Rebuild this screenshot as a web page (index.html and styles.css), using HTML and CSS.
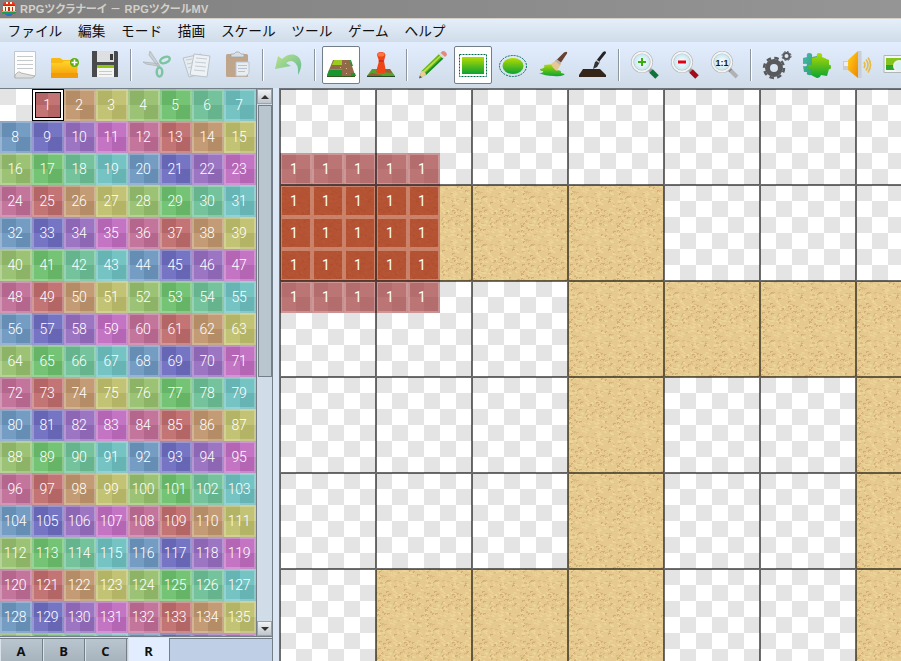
FILE: index.html
```html
<!DOCTYPE html>
<html lang="ja">
<head>
<meta charset="utf-8">
<title>RPGツクラナーイ - RPGツクールMV</title>
<link rel="stylesheet" href="styles.css">
</head>
<body>
<svg class="defs" width="0" height="0" aria-hidden="true">
  <defs>
    <linearGradient id="lime" x1="0" y1="0" x2="0" y2="1"><stop offset="0" stop-color="#b4dc00"/><stop offset="1" stop-color="#0aa234"/></linearGradient>
    <linearGradient id="gold" x1="0" y1="0" x2="0" y2="1"><stop offset="0" stop-color="#ffd62a"/><stop offset="1" stop-color="#f39a08"/></linearGradient>
    <linearGradient id="horn" x1="0" y1="0" x2="1" y2="1"><stop offset="0" stop-color="#ffd21d"/><stop offset="1" stop-color="#ef8500"/></linearGradient>
    <linearGradient id="teal" x1="0" y1="0" x2="1" y2="1"><stop offset="0" stop-color="#49b9ae"/><stop offset="1" stop-color="#279b62"/></linearGradient>
    <linearGradient id="undo" x1="0" y1="0" x2="1" y2="1"><stop offset="0" stop-color="#bce28c"/><stop offset="1" stop-color="#61bb94"/></linearGradient>
    <radialGradient id="glass"><stop offset="0" stop-color="#fff"/><stop offset="1" stop-color="#bce4ef"/></radialGradient>
  </defs>
</svg>
<header class="titlebar">
  <svg class="logo" width="14" height="14" viewBox="0 0 14 14"><path d="M1 2l2-2h8l2 2v6h1v3l-3 1-2 2H5l-2-2-3-1V8h1z" fill="#e83418"/><path d="M4 0h2v2H4zM8 0h2v2H8zM1 4h12v5H1z" fill="#fff3dc"/><path d="M3 5h1v4H3zM6 5h2v4H6zM10 5h1v4h-1zM1 3h12v1H1z" fill="#c52a18"/><path d="M0 9h14v1H0z" fill="#e4a818"/><path d="M0 10h14v1l-2 1H2l-2-1z" fill="#229b47"/><path d="M3 12h8l-3 2H6z" fill="#2572d6"/></svg>
  <span class="caption">RPGツクラナーイ － RPGツクールMV</span>
</header>
<nav class="menubar"><span>ファイル</span><span>編集</span><span>モード</span><span>描画</span><span>スケール</span><span>ツール</span><span>ゲーム</span><span>ヘルプ</span></nav>
<div class="toolbar">
  <div class="tool"><svg viewBox="0 0 28 28"><path d="M3.500 .5h21v24l-3 2h-18z" fill="#fdfdfd" stroke="#c3c7c9"/><path d="M6 5.500h16M6 9.500h16M6 13.500h16M6 17.500h16" stroke="#c6c9cb"/><path d="M4 24q4-5 6-2l14 3-3 2H4z" fill="#dfe0dd" stroke="#a5a8a5" stroke-width=".8"/></svg></div>
  <div class="tool"><svg viewBox="0 0 28 28"><path d="M0 8q0-1 1-1h8l3 2h14v17H0z" fill="#f9b912"/><path d="M0 12h11l2-2h14l-1 16H1z" fill="url(#gold)"/><path d="M0 22h27v5H0z" fill="#f29a08"/><circle cx="23.500" cy="11.500" r="4.500" fill="#58ad12"/><path d="M20.500 11.500h6M23.500 8.500v6" stroke="#fff" stroke-width="1.600"/></svg></div>
  <div class="tool"><svg viewBox="0 0 28 28"><path d="M1 0h25l1 1v25H1z" fill="#494a4c"/><path d="M6 0h17v11H6z" fill="#dedfe1"/><path d="M19 3h3v6h-3z" fill="#3b3c3e"/><path d="M6 14h17v12H6z" fill="#f5f5f5"/><path d="M6 14h17v3H6z" fill="#8cca08"/><path d="M8 20.500h13M8 23.500h13" stroke="#c9c9c9"/></svg></div>
  <i class="sep"></i>
  <div class="tool"><svg viewBox="0 0 28 28"><path d="M0 11l15 1.500v2.500L3 13zM7 0l10 15-2 1L6 4z" fill="#cbd1d3" stroke="#a8b0b3" stroke-width=".7"/><g fill="none" stroke="#7cc5a0" stroke-width="2.500"><ellipse cx="22" cy="9" rx="5" ry="2.800" transform="rotate(-22 22 9)"/><ellipse cx="16.500" cy="21" rx="2.800" ry="4.500"/></g></svg></div>
  <div class="tool"><svg viewBox="0 0 28 28" stroke="#b9c3cb"><path d="M0 7l18-4 5 19-17 4z" fill="#e6ebef"/><path d="M11 3l16 2-3 21-17-2z" fill="#eef2f5"/><path d="M13 7l11 1M12 11l11 1M12 15l11 1M11 19l11 1M3 9l6-1M4 13l5-1M5 17l3-1" stroke="#c3cdd4"/></svg></div>
  <div class="tool"><svg viewBox="0 0 28 28"><rect x="3" y="3" width="22" height="23" rx="1.500" fill="#bfa589"/><path d="M8 3h3l2-2h3l2 2h3v3H8z" fill="#d9dfe2" stroke="#9aa5ac" stroke-width=".7"/><path d="M13 11h13v11l-3 3H13z" fill="#e8edf2" stroke="#bbc5d2"/><path d="M15 14.500h9M15 17.500h9M15 20.500h7" stroke="#bac2cd"/></svg></div>
  <i class="sep"></i>
  <div class="tool"><svg viewBox="0 0 28 28"><path d="M0 18L3 5l4 3q8-7 15-3 8 6 1 19 1-12-6-14-4 0-6 2l5 3z" fill="url(#undo)"/></svg></div>
  <i class="sep"></i>
  <div class="tool active"><svg viewBox="0 0 28 28"><path d="M6 9h17l5 15v2H0v-2z" fill="#926a49"/><path d="M7 9h8v5H5z" fill="#9acb1e"/><path d="M23 9h1l2 6h-2zM2 19h13v6H0z" fill="#18972f"/><path d="M24 22h4l1 3h-5z" fill="#18972f"/><path d="M3 18.500h12" stroke="#55b522"/><path d="M0 25h28v1H0z" fill="#315a20"/><path d="M13 16h1v1h-1zM19 17h1v1h-1zM18 12h1v1h-1zM19 22h1v1h-1z" fill="#d9b58c"/></svg></div>
  <div class="tool"><svg viewBox="0 0 28 28"><path d="M5 18h18l5 7H0z" fill="#57a02a"/><path d="M15 18h8l2 4-9-1zM1 24l4-2 10 2v1H0z" fill="#995c36"/><path d="M0 25h28v1H0z" fill="#27482b"/><path d="M12 10l-2-6q0-3 4-3t4.500 3l-1.500 6 2 11q-5 3-10 0z" fill="#ee4418"/><ellipse cx="14" cy="3.500" rx="3.500" ry="2" fill="#ff7440"/><path d="M11.500 10h5" stroke="#b81c08"/></svg></div>
  <i class="sep"></i>
  <div class="tool"><svg viewBox="0 0 28 28"><path d="M0 27l2.500-7L20 3l4 4.500L7 24z" fill="#68b419"/><path d="M3.500 20.500l2 1L22 5.500l-1-1z" fill="#b9e343"/><path d="M5.500 23l1.500 1L24.500 7.500l-1-1.500z" fill="#168b35"/><path d="M0 27l2.500-7q4 0 4.500 4z" fill="#efcc94"/><path d="M0 27.500l1-3 2 2z" fill="#555"/><path d="M21.500 2l2-2q4 0 4.500 4l-2 2z" fill="#e5897e"/><path d="M20.500 2.500l4.500 4.500" stroke="#dcdcdc" stroke-width="2"/></svg></div>
  <div class="tool active"><svg viewBox="0 0 28 28"><path d="M3 6h22v17H3z" fill="url(#lime)"/><path d="M.5 3.500h27v22H.5z" fill="none" stroke="#006c44" stroke-dasharray="2 1"/></svg></div>
  <div class="tool"><svg viewBox="0 0 28 28"><ellipse cx="14" cy="15" rx="10.500" ry="8" fill="url(#lime)"/><ellipse cx="14" cy="15" rx="13.500" ry="10.500" fill="none" stroke="#006c55" stroke-dasharray="2 1"/></svg></div>
  <div class="tool"><svg viewBox="0 0 28 28"><path d="M5 14l11-1q3 5 1 6 6 0 5 3 5 1 3 2-5 2-10 1-9 0-15-3 5 0 4-2-3 0-3-2 6-1 4-4z" fill="url(#lime)"/><path d="M12 13l5-4q4 1 5 4l-4 7q-4-2-6-7z" fill="#e6c795"/><path d="M16 10l2-2 4 4-1 2z" fill="#b7b4ae"/><path d="M18 8.500l7-7q4-2 3 1l-6 9z" fill="#6b4030"/></svg></div>
  <div class="tool"><svg viewBox="0 0 28 28"><path d="M4 18h17l6 6v2H0v-2z" fill="#352418"/><path d="M14 18l2-7 3-2 2 2-3 5z" fill="#333"/><path d="M17 10l7-9q3-2 3 1l-7 9z" fill="#242426"/><path d="M17 9l3.500 2.500" stroke="#ccc" stroke-width="1.300"/></svg></div>
  <i class="sep"></i>
  <div class="tool"><svg viewBox="0 0 28 28"><path d="M17 17l3 3" stroke="#999" stroke-width="4"/><path d="M20 20l6 6" stroke="#127338" stroke-width="5"/><circle cx="11" cy="11" r="9.500" fill="url(#glass)" stroke="#b5b8ba" stroke-width="3"/><circle cx="11" cy="11" r="9.500" fill="none" stroke="#f4f4f4" stroke-width="1.800"/><path d="M7 11h8M11 7v8" stroke="#36ae0b" stroke-width="2"/></svg></div>
  <div class="tool"><svg viewBox="0 0 28 28"><path d="M17 17l3 3" stroke="#999" stroke-width="4"/><path d="M20 20l6 6" stroke="#a10c19" stroke-width="5"/><circle cx="11" cy="11" r="9.500" fill="url(#glass)" stroke="#b5b8ba" stroke-width="3"/><circle cx="11" cy="11" r="9.500" fill="none" stroke="#f4f4f4" stroke-width="1.800"/><path d="M7 11h8" stroke="#e40013" stroke-width="3"/></svg></div>
  <div class="tool"><svg viewBox="0 0 28 28"><path d="M17 17l3 3" stroke="#888" stroke-width="4"/><path d="M20 20l6 6" stroke="#afb1b4" stroke-width="4"/><circle cx="11" cy="11" r="9.500" fill="url(#glass)" stroke="#b5b8ba" stroke-width="3"/><circle cx="11" cy="11" r="9.500" fill="none" stroke="#f4f4f4" stroke-width="1.800"/><text x="11" y="14.500" class="ratio">1:1</text></svg></div>
  <i class="sep"></i>
  <div class="tool"><svg viewBox="0 0 28 28" fill="none" stroke="#58595b"><circle cx="11" cy="17" r="6.500" stroke-width="5"/><circle cx="11" cy="17" r="10" stroke-width="2.500" stroke-dasharray="4.500 3.350"/><circle cx="23.500" cy="5" r="3" stroke-width="2"/><circle cx="23.500" cy="5" r="4.500" stroke-width="1" stroke-dasharray="2 1.530"/></svg></div>
  <div class="tool"><svg viewBox="0 0 28 28"><path d="M0 7l4-1q-1-4 2-4 4 0 3 4l5-1 2 16H9q0 4-3 3-3 0-2-3H1l-1-6q4 1 4-1t-4-1z" fill="url(#teal)"/><path d="M9 7l5-1q-1-4 2-4 4 0 3 4l7 3v5q2-1 2 2t-2 2l-2 7-6-1q-1 3-4 3l-6-3 1-6q-4 1-4-2t4-2z" fill="url(#lime)"/></svg></div>
  <div class="tool"><svg viewBox="0 0 28 28"><path d="M0 10h6v9H0z" fill="#c9cdd0"/><path d="M1 11h5v4H1z" fill="#eee"/><path d="M5 9l10-9v27L5 19z" fill="url(#horn)"/><path d="M15 0h3.500v27H15z" fill="#c9cfd3"/><path d="M21 11q2 3 0 6M23 8.500q4 5 0 11M25 6.500q5 7 0 15" fill="none" stroke="#e4bc48" stroke-width="1.600"/></svg></div>
  <div class="tool"><svg viewBox="0 0 28 28"><path d="M1 4.500h27v17H1z" fill="#f3f6f6" stroke="#aeb7b7"/><path d="M3 7h23v12H3z" fill="#83c51d"/><path d="M3 14h23v5H3z" fill="#2da52c"/><circle cx="16" cy="15" r="5" fill="#d7f0f2" stroke="#eee" stroke-width="2"/></svg></div>
</div>
<main class="workspace">
  <section class="palette-panel">
    <div class="palette-view">
      <div class="palette" id="palette"></div>
      <div class="scrollbar"><div class="arrow"><i class="up"></i></div><div class="track"><div class="thumb"></div></div><div class="arrow"><i class="down"></i></div></div>
    </div>
    <div class="tabs"><span>A</span><span>B</span><span>C</span><span class="current">R</span></div>
  </section>
  <section class="map-panel">
    <svg class="map" width="621" height="572" viewBox="0 0 621 572">
      <defs>
        <pattern id="checker" width="32" height="32" patternUnits="userSpaceOnUse"><path d="M0 0h32v32H0z" fill="#fff"/><path d="M0 0h16v16H0zM16 16h16v16H16z" fill="#e4e4e4"/></pattern>
        <pattern id="sand" width="48" height="48" patternUnits="userSpaceOnUse"><rect width="48" height="48" fill="#e5c98f"/><g id="grains"></g></pattern>
      </defs>
      <rect width="621" height="572" fill="url(#checker)"/>
      <path d="M0 96h384v96h237v384h-45V288H384v288H96V480h192V192H0z" fill="url(#sand)"/>
      <g id="regions"></g>
      <path id="gridlines" class="gridlines"/>
    </svg>
  </section>
</main>
<script src="app.js"></script>
</body>
</html>
```
FILE: styles.css
```css
* { box-sizing: border-box; }
body { margin: 0; width: 901px; height: 661px; overflow: hidden; display: flex; flex-direction: column; background: #dbe7f5; font-family: "Noto Sans CJK JP", sans-serif; }
.defs { position: absolute; }
.titlebar { height: 19px; flex: none; display: flex; align-items: center; gap: 4px; padding: 0 0 1px 2px; background: linear-gradient(90deg, #808080, #959595); border-bottom: 1px solid #d4d0c8; color: #d4d0c8; }
.caption { font: 700 11px/18px "Liberation Sans", "Noto Sans CJK JP", sans-serif; white-space: pre; font-feature-settings: "palt"; letter-spacing: .2px; }
.menubar { height: 23px; flex: none; display: flex; gap: 15.7px; padding-left: 7.500px; font-size: 13.7px; line-height: 23px; color: #111; background: linear-gradient(#e5effc, #d0dce8); }
.menubar span { white-space: nowrap; }
.toolbar { height: 46px; flex: none; display: flex; align-items: center; gap: 2px; padding-left: 6px; background: linear-gradient(#e2eeff, #cfdbe7); overflow: hidden; }
.tool { width: 38px; height: 38px; flex: none; padding: 5px; }
.tool svg { display: block; width: 28px; height: 28px; overflow: visible; }
.tool.active { background: #fff; border: 1px solid #737e89; border-radius: 2px; padding: 4px; }
.sep { width: 2px; height: 32px; flex: none; margin: 0 4px; background: #8d969f; border-right: 1px solid #fff; }
.ratio { font: 700 9px "Liberation Sans", sans-serif; text-anchor: middle; fill: #171717; }
.workspace { flex: 1; display: flex; gap: 6px; min-height: 0; }
.palette-panel { width: 273px; flex: none; display: flex; flex-direction: column; border-right: 1px solid #737e89; }
.palette-view { height: 549px; flex: none; display: flex; border-top: 1px solid #737e89; border-bottom: 1px solid #737e89; overflow: hidden; }
.palette { width: 256px; flex: none; display: grid; grid-template-columns: repeat(8, 32px); grid-auto-rows: 32px; }
.tile { --a: #fff; --b: #e4e4e4; background: conic-gradient(var(--a) 25%, var(--b) 0 50%, var(--a) 0 75%, var(--b) 0); border: 2px solid rgba(255, 255, 255, .25); background-origin: border-box; color: #fff; font: 300 14px/28px Roboto, sans-serif; text-align: center; letter-spacing: -.3px; padding-right: 2px; white-space: nowrap; }
.tile.empty { border: 0; }
.tile.selected { border: 0; padding: 2px 4px 2px 2px; box-shadow: inset 0 0 0 1px #000, inset 0 0 0 3px #fff, inset 0 0 0 4px #000; }
.hue0 { --a: #c37575; --b: #b46666; }
.hue1 { --a: #c39c75; --b: #b48d66; }
.hue2 { --a: #c3c375; --b: #b4b466; }
.hue3 { --a: #9cc375; --b: #8db466; }
.hue4 { --a: #75c375; --b: #66b466; }
.hue5 { --a: #75c39c; --b: #66b48d; }
.hue6 { --a: #75c3c3; --b: #66b4b4; }
.hue7 { --a: #759cc3; --b: #668db4; }
.hue8 { --a: #7575c3; --b: #6666b4; }
.hue9 { --a: #9c75c3; --b: #8d66b4; }
.hue10 { --a: #c375c3; --b: #b466b4; }
.hue11 { --a: #c3759c; --b: #b4668d; }
.scrollbar { width: 16px; border-left: 1px solid #737e89; display: flex; flex-direction: column; background: #d0dce7; }
.arrow { height: 15px; display: flex; align-items: center; justify-content: center; background: linear-gradient(#f1f3f5, #bfc5cb); border: 1px solid #9aa3ac; }
.up, .down { width: 0; height: 0; border: 4px solid transparent; border-top: 0; border-bottom-color: #333; }
.down { border-top: 4px solid #333; border-bottom: 0; }
.track { flex: 1; padding: 1px 0 0 1px; }
.thumb { height: 272px; background: #b9c5cf; border: 1px solid #737e89; }
.tabs { flex: 1; display: flex; margin-top: 1px; background: #becfe6; border-top: 1px solid #737e89; }
.tabs span { width: 42px; height: 23px; font: 700 13px/23px "Open Sans", sans-serif; padding-top: 1px; text-align: center; color: #111; background: linear-gradient(#b9c5cf, #a6b2bc); border-right: 1px solid #737e89; box-shadow: inset 1px 0 #d7e2eb; }
.tabs .current { margin-left: 1px; margin-top: -1px; height: 24px; padding-top: 2px; line-height: 22px; background: #e2eeff; }
.tabs span:first-child { width: 43px; }
.map-panel { flex: 1; min-width: 0; border-top: 1px solid #6d7278; border-left: 1px solid #6d7278; overflow: hidden; }
.map { display: block; }
.gridlines { fill: none; stroke: #000; stroke-opacity: .57; stroke-width: 2; }
.region-text { font: 400 14px Roboto, sans-serif; fill: #fff; text-anchor: middle; }
```
FILE: app.js
```js
// Region palette: slot 0 clears, the rest cycle through twelve hues.
// The last row only peeks in at the bottom, so its tiles carry no number.
const palette = document.getElementById('palette');
for (let n = 0; n < 144; n++) {
  const tile = document.createElement('div');
  tile.className = 'tile ' + (n ? 'hue' + (n - 1) % 12 : 'empty') + (n === 1 ? ' selected' : '');
  if (n && n < 136) tile.textContent = n;
  palette.appendChild(tile);
}

const NS = 'http://www.w3.org/2000/svg';
function add(parent, name, attrs, text) {
  const el = document.createElementNS(NS, name);
  for (const key in attrs) el.setAttribute(key, attrs[key]);
  if (text) el.textContent = text;
  parent.appendChild(el);
}

// Sand grain with a fixed seed, so the terrain is the same on each load.
let seed = 71;
function rnd(n) {
  seed = (seed * 1103515245 + 12345) % 2147483648;
  return Math.floor(seed / 2147483648 * n);
}
const grains = document.getElementById('grains');
const shades = ['#ead394', '#ecd598', '#e8cb8d', '#dcba80', '#d3ae76'];
for (let i = 0; i < 260; i++) {
  const x = rnd(46), y = rnd(47), shade = rnd(5), w = 2 + rnd(2);
  const d = shade < 3
    ? `M${x} ${y}h${w}v1h1v1h-${w}v-1h-1z`
    : `M${x} ${y}h${w}v1h-${w - 1}v1h-1z`;
  add(grains, 'path', { d, fill: shades[shade], 'shape-rendering': 'crispEdges' });
}

const regions = document.getElementById('regions');
for (let r = 0; r < 5; r++) {
  for (let c = 0; c < 5; c++) {
    const x = c * 32, y = 64 + r * 32, onSand = r > 0 && r < 4;
    add(regions, 'rect', {
      x, y, width: 32, height: 32,
      fill: onSand ? '#a63219' : '#a03c3c', 'fill-opacity': onSand ? 0.78 : 0.71
    });
    add(regions, 'rect', {
      x: x + 1, y: y + 1, width: 30, height: 30, fill: 'none',
      stroke: onSand ? '#dfb2a2' : '#fff', 'stroke-width': 2,
      'stroke-opacity': onSand ? 0.5 : 0.25
    });
    add(regions, 'text', { x: x + 14, y: y + 21, class: 'region-text' }, '1');
  }
}

let lines = '';
for (let x = 0; x <= 621; x += 96) lines += `M${x} 0V572`;
for (let y = 0; y <= 572; y += 96) lines += `M0 ${y}H621`;
document.getElementById('gridlines').setAttribute('d', lines);
```
